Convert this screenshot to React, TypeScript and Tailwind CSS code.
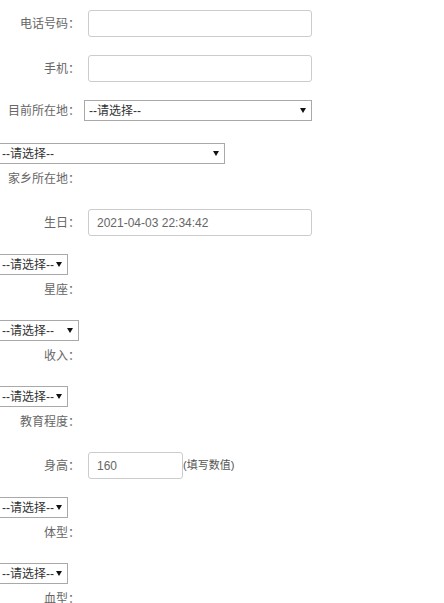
const FONT = { fontFamily: '"Liberation Sans", "Noto Sans CJK SC", sans-serif' };

function Arrow() {
  return (
    <svg width="6" height="5" viewBox="0 0 6 5" className="shrink-0">
      <polygon points="0,0 6,0 3,5" fill="#111" />
    </svg>
  );
}

function FakeSelect({ width, cut = false }: { width: string; cut?: boolean }) {
  return (
    <div
      className={`flex h-[21px] items-center justify-between border border-[#a9a9a9] bg-white pr-[5px] text-[12px] text-[#333] ${width} ${
        cut ? 'border-l-0 pl-[2px]' : 'pl-[4px]'
      }`}
    >
      <span>--请选择--</span>
      <Arrow />
    </div>
  );
}

function Label({ text }: { text: string }) {
  return <div className="w-[80px] shrink-0 text-right text-[12px] text-[#666]">{text}</div>;
}

function InputRow({ label, value, width = 'w-[224px]', hint }: { label: string; value?: string; width?: string; hint?: string }) {
  return (
    <div className="mb-[18px] flex items-center">
      <Label text={label} />
      <div
        className={`ml-[8px] flex h-[27px] items-center rounded-[3px] border border-[#ccc] bg-white pl-[8px] text-[12px] text-[#666] ${width}`}
      >
        {value}
      </div>
      {hint && <span className="text-[11px] text-[#555]">{hint}</span>}
    </div>
  );
}

function WrappedSelectRow({ label, width }: { label: string; width: string }) {
  return (
    <div className="mb-[15px]">
      <FakeSelect width={width} cut />
      <div className="flex h-[30px] items-center">
        <Label text={label} />
      </div>
    </div>
  );
}

export default function App() {
  return (
    <div className="h-[603px] w-[444px] overflow-hidden bg-white pt-[10px]" style={FONT}>
      <InputRow label="电话号码：" />
      <InputRow label="手机：" />
      <div className="mb-[22px] flex items-center">
        <Label text="目前所在地：" />
        <div className="ml-[4px]">
          <FakeSelect width="w-[228px]" />
        </div>
      </div>
      <WrappedSelectRow label="家乡所在地：" width="w-[225px]" />
      <InputRow label="生日：" value="2021-04-03 22:34:42" />
      <WrappedSelectRow label="星座：" width="w-[68px]" />
      <WrappedSelectRow label="收入：" width="w-[79px]" />
      <WrappedSelectRow label="教育程度：" width="w-[68px]" />
      <InputRow label="身高：" value="160" width="w-[95px]" hint="(填写数值)" />
      <WrappedSelectRow label="体型：" width="w-[68px]" />
      <WrappedSelectRow label="血型：" width="w-[68px]" />
    </div>
  );
}
